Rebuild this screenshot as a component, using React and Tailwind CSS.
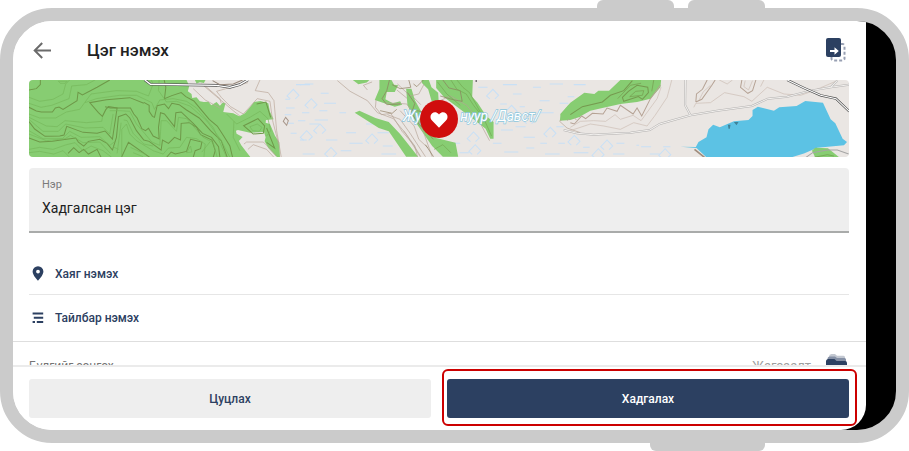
import { useState } from "react";

const ArrowBack = () => (
  <svg width="18" height="18" viewBox="0 0 18 18" fill="none" stroke="#6b6b6b" strokeWidth="2">
    <path d="M18 8.500H2M9.200 1 1.700 8.500l7.500 7.500" />
  </svg>
);

const MoveIcon = () => (
  <svg width="20" height="25" viewBox="0 0 20 25" fill="none">
    <path
      d="M15 6h1.500a2 2 0 0 1 2 2V20.500a2 2 0 0 1-2 2H7.500A2 2 0 0 1 5.500 20.500V19"
      stroke="#98a0b3"
      strokeWidth="2"
      strokeDasharray="3 2"
    />
    <rect x="0" y="0" width="15" height="19" rx="2" fill="#2c4061" />
    <path d="M4 12h4.500V9.300l4.300 3.700-4.300 3.700V14H4z" fill="#fff" />
  </svg>
);

const PlaceIcon = () => (
  <svg width="12" height="15" viewBox="0 0 12 15">
    <path
      d="M6 0.200A5.400 5.400 0 0 0 .6 5.600C.6 9.500 6 14.800 6 14.800s5.400-5.300 5.400-9.200A5.400 5.400 0 0 0 6 .2zm0 7.300a1.900 1.900 0 1 1 0-3.800 1.900 1.900 0 0 1 0 3.800z"
      fill="#2c4061"
    />
  </svg>
);

const NotesIcon = () => (
  <svg width="12" height="12" viewBox="0 0 12 12" fill="#2c4061">
    <path d="M0.600 0.500h10.600v2H0.600zM1.800 4.700h9.400v2H1.800zM0.600 9h2.400v2H0.600zM4.800 9h6.400v2H4.800z" />
  </svg>
);

const FolderIcon = () => (
  <svg width="21" height="24" viewBox="0 0 21 24">
    <path d="M3 2.500Q3.200 0 5.500 0h3.500l2 1.800h6.500q1.500 0 1.500 1.500V8H3z" fill="#c3c8d1" />
    <path d="M1.500 5Q1.500 2.500 4 2.500h5l2 1.500h7.500q1.500 0 1.500 1.500V9H1.500z" fill="#8590a5" />
    <path d="M0 7.500q0-2.500 2.500-2.500H8.500l2 2h8.500q2 0 2 2V24H0z" fill="#2c4061" />
  </svg>
);

const HeartPin = () => (
  <svg width="38" height="38" viewBox="0 0 38 38">
    <circle cx="19" cy="19" r="19" fill="#d00d0d" />
    <path
      d="M19 27.800 12 20.600C10 18.600 9.900 15.200 11.900 13.400c2-1.800 5-1.500 6.500.4l.6.800.6-.8c1.500-1.900 4.500-2.200 6.500-.4 2 1.800 1.900 5.200-.1 7.200z"
      fill="#fff"
    />
  </svg>
);

// marsh symbol, a diamond left open at the lower right
const Marsh = ({ x, y }) => (
  <path transform={`translate(${x} ${y})`} d="M-9 13-19 4 0-16 17 2 6 13" />
);

const marshes = [
  [792, 44], [846, 72], [832, 168], [872, 148], [1028, 178], [905, 218],
  [1390, 44], [1446, 92], [1500, 118], [1332, 172], [1562, 158], [1337, 210],
  [1634, 182], [1732, 196], [1706, 222], [1906, 222],
];

const TerrainMap = () => (
  <svg viewBox="0 0 2457 231" preserveAspectRatio="xMidYMid slice" className="h-full w-full" fill="none">
    <rect width="2457" height="231" fill="#eae6e3" />
    <g stroke="#c8e0f6" strokeWidth="3">
      {marshes.map(([x, y]) => (
        <Marsh key={`${x}-${y}`} x={x} y={y} />
      ))}
      <path d="M768 58h14M770 84h14M766 104h20M782 84h14M800 14h16M826 12h26M776 130h18M784 160h18M806 122h22" />
      <path d="M812 14h30M874 40h24M884 70h36M818 98h22M870 92h24M856 120h40M930 98h20M812 180h20M840 132h30M890 180h34M820 222h36M934 212h32M950 158h30M960 190h40M1010 132h24M1044 158h34M1060 198h30M1056 222h44" />
      <path d="M1346 22h28M1420 14h42M1450 42h26M1510 22h24M1560 12h40M1530 62h30M1412 72h20M1470 80h16M1400 122h30M1414 150h36M1458 140h30M1530 98h42M1590 70h26M1390 190h26M1424 216h42M1482 172h34M1490 204h24M1532 190h20M1546 222h44M1290 218h28M1270 190h22M1586 190h20M1580 140h22" />
      <path d="M1632 14h36M1614 50h20M1632 218h44M1760 190h24M1660 202h20M1750 222h34M1820 196h8M1834 200h30M1860 222h30M1900 200h22" />
    </g>

    {/* west hills */}
    <g transform="translate(-28 -28)">
      <path
        fill="#87cd72"
        d="M28 28H500L508 46 504 62 515 70 517 82 530 80 540 92 552 94 566 93 574 104 590 94 600 105 608 96 617 97 610 124 640 128 658 137 675 128 690 110 702 94 722 91 745 98 750 123 761 146 738 148 737 156 750 160 765 195 778 215 780 260H770L742 235 690 260H28Z"
      />
      <path fill="#87cd72" d="M525 28h32l-5 9-12-2-10 4z" />
      <path fill="#eae6e3" d="M648 180 654 178 690 186 732 184 737 200 734 212 745 232 772 260H692L664 224 657 211 668 199 650 189z" />
      <g stroke="#6e9848" strokeWidth="3">
        <path d="M28 110 50 121 65 124 98 124 107 112 118 109 130 116 172 90 175 65 188 73 232 50 270 28" />
        <path d="M28 153 45 175 76 197 120 196 133 193 141 167 190 185 232 188 256 181 278 205 292 112 266 108 258 117 248 137 236 126 210 96 260 87 330 81 372 98" />
        <path d="M256 108 272 112 332 112 342 130 352 142 366 174 377 180 386 173 400 196 418 205 416 170 422 126 434 130 464 168 468 126 484 124 520 158 548 188 575 200 596 228 600 260" />
        <path d="M433 28 438 50 434 84 456 75 484 66 498 78 522 91 546 120 568 146 592 166 610 194 630 226 638 260" />
        <path d="M372 95 388 104 388 122 398 137 404 140 412 105 434 100 446 114 456 98 478 102 500 118 538 142 572 180 604 210 622 260" />
        <path d="M28 202 60 214 98 212 140 206 168 202 176 214 192 226 206 212 240 206 262 218 278 238 290 200 296 138 318 130 330 142 350 180 372 208 388 212 424 238 428 208 446 218 464 200 482 208 484 158 508 156 530 170 542 192 576 208 586 240 580 260" />
        <path d="M145 248 162 231 178 246 192 236 206 250 232 236 244 260M305 260 326 215 390 260M440 260 454 244 466 250 500 242 512 206 546 214 542 234 526 240 520 260" />
        <path d="M671 165 714 144 734 166 730 188 700 190Z" />
        <path d="M710 100 738 94 752 140M740 172 764 232 740 215" />
        <path d="M62 28 62 42 50 54 28 58" />
      </g>
      <g stroke="#76b65b" strokeWidth="2">
        <path d="M28 80 60 92 100 86 130 70 138 40 150 28M28 98 64 110 96 104 148 84 156 46 200 42 226 28" />
        <path d="M28 130 60 142 108 142 140 124 180 116 214 70 290 60 350 62 386 76 400 40 394 28" />
        <path d="M28 140 80 166 112 168 136 150 200 156 246 152 248 140M28 146 70 182 116 182 138 160 196 172 250 170 270 190 280 130" />
        <path d="M28 180 70 204 128 204 150 182 184 200 240 198 270 224 286 212M28 190 80 210 136 204 152 194 190 216 240 214 272 248" />
        <path d="M28 236 60 230 100 236 140 222 166 216 190 240 214 226 250 240 276 260M28 246 60 242 102 250 130 240 150 260" />
        <path d="M196 96 230 84 300 74 350 74 396 96 404 116 420 88 460 84 500 92 530 112 580 170 620 260" />
        <path d="M270 120 300 120 330 122 350 160 376 190 396 214 420 224 424 150 440 150 470 182 476 140 500 144 550 200 580 216 592 260" />
        <path d="M306 260 306 176 320 160 330 190 350 210 400 240 430 250 446 232 480 230 500 200 530 204 556 220 552 260" />
        <path d="M312 148 322 150 340 188 372 220 400 226M292 248 304 156M332 230 380 252M340 246 370 258M280 228 296 236" />
        <path d="M418 28 416 60 440 94 470 92 510 106 560 150 602 206 630 260M500 246 512 226 516 244zM546 244 570 214" />
        <path d="M620 130 650 160 690 140 720 122 744 144 752 180 740 196M690 168 712 160 726 170 718 182 698 180zM642 152 640 200 660 240" />
        <path d="M116 32h26l-6 6h-14z" />
      </g>
      <g stroke="#b9a699" strokeWidth="2">
        <path d="M545 40 590 78 640 120 660 136M520 54 556 88 600 112M556 46 600 84 604 98" />
        <path d="M720 28 706 60 745 66 762 90 770 180 784 260M590 62 640 48 684 36M590 62 604 80 632 108 670 130 712 84 750 92 758 150 776 220" />
        <path d="M672 220 680 214 730 214 746 230 768 256M684 236 700 222 740 236 762 260" />
      </g>
      <path d="M790 152 797 140 805 150 800 164Z" stroke="#a8978b" strokeWidth="3" />
      <path d="M375 28 392 41 590 44 630 50 660 42 684 28" stroke="#4d4d4d" strokeWidth="8" />
      <path d="M375 28 392 41 590 44 630 50 660 42 684 28" stroke="#fff" strokeWidth="4" />
      <path d="M578 30 600 42 640 40 668 28" stroke="#96867a" strokeWidth="3" />
    </g>

    {/* ridge in the middle */}
    <g transform="translate(812 -28)">
      <g fill="#87cd72">
        <path d="M158 28h50l-8 8-25 5zM238 28h36l8 14 12 2-10 20-24 0-4 22 22 12 22-6 6 10-22 6-60-20 14-34z" />
        <path d="M318 54h16l10 34 20 36 20 50 24 28 58 14 8 42H428L396 226 350 160 322 104zM364 28h22l8 22 20 16 2 34-22-10-10-34-18-18z" />
        <path d="M408 28h110l-2 50 16 18 26 40 22 18 0 50h-10l-14-30-36-28-56-42-32-24-24-28z" />
        <path d="M164 126 178 120 226 142 266 154 300 190 354 258H318L266 182 236 172Z" />
        <path d="M840 84 804 104 784 130 778 150 810 148 840 138z" />
      </g>
      <g stroke="#b5a396" strokeWidth="2">
        <path d="M112 30 150 62 202 90 232 126 280 144 318 190 360 258" />
        <path d="M202 58 190 44 216 34M228 88 226 110 244 132 272 128 306 182 340 222 362 258M292 40 330 76 356 70 372 40M290 58 322 84M340 80 362 102M254 96 320 100 344 132 372 190 396 258" />
        <path d="M262 132 300 146 330 188 376 258M300 120 342 166 356 206 384 232M310 180 344 226 352 258M420 90 450 76 500 104 536 150 568 210" />
        <path d="M778 152 812 126 840 124M778 152 800 172 840 186M800 150 818 136 828 148" />
      </g>
      <g stroke="#8c7a5d" strokeWidth="2">
        <path d="M268 28 260 60 246 84 260 102 300 100M326 28 332 50 300 54 276 42M370 28 350 48 340 40" />
        <path d="M322 66 344 98 334 128 352 154 372 178 400 206M350 120 370 124M376 222 400 258" />
        <path d="M428 28 446 52 480 60 486 92 462 88 420 76M240 120 276 128 290 116" />
      </g>
      <g stroke="#74a753" strokeWidth="2">
        <path d="M452 28 470 56 498 70 520 104 550 142 574 196M470 28 488 50 508 66 540 124M412 34 440 70 480 104M402 236 428 222 452 246" />
      </g>
      <path d="M528 28v6" stroke="#666" strokeWidth="4" />
      <g fontFamily="Roboto, sans-serif" fontSize="41" fontStyle="italic" fill="#fff" stroke="#8cc7de" strokeWidth="4" paintOrder="stroke">
        <text x="309" y="150">Жуун</text>
        <text x="480" y="150">нуур /Давст/</text>
      </g>
    </g>

    {/* lake and roads in the east */}
    <g transform="translate(1622 -28)">
      <path fill="#87cd72" d="M150 28H272L270 50 240 84 200 94 150 100 96 112 60 120 32 136 0 144-30 148V130L0 96 42 66 72 70 84 60 116 60Z" />
      <g stroke="#75994f" strokeWidth="3">
        <path d="M0 132 36 108 96 94 120 74 160 60 186 30M156 80 174 62 200 44 232 50 234 66 216 86 204 78 160 92Z" />
        <path d="M178 78 196 62 220 60 216 74 196 76ZM142 84 180 44 212 38M250 28 244 62" strokeWidth="2" />
      </g>
      <g stroke="#b5a294" strokeWidth="3">
        <path d="M0 156 12 160 34 136 46 144 66 128 98 130 110 112 140 122 150 104 188 130 200 112 214 136 240 84 270 44" />
        <path d="M376 94 378 70 396 56 410 28M376 94 394 86 424 44 434 28M514 28 510 50 532 68 546 60 556 28" />
      </g>
      <g stroke="#cbbdb3" strokeWidth="2">
        <path d="M0 170 30 152 70 150 106 152 134 132 150 146 188 134 212 150 260 84 272 50" />
        <path d="M0 180 60 160 100 166 150 176 190 156 230 166 254 134 290 80 304 28" />
        <path d="M370 110 376 98 420 96 462 66 520 78 544 92 590 50 640 70 690 74 730 60 800 30" />
        <path d="M386 88 398 64 420 44M524 30 520 48 534 58 546 30M446 28 470 40 486 28M580 28 570 48" />
      </g>
      <g stroke="#b3b1b0" strokeWidth="6">
        <path d="M-20 178 20 188 70 192 180 186 238 178 268 160 360 134 440 120 544 106 592 84 650 78 720 60 780 50 836 42" />
        <path d="M345 28 344 104 360 134M780 50 800 30" />
      </g>
      <g stroke="#f2f0ee" strokeWidth="3">
        <path d="M-20 178 20 188 70 192 180 186 238 178 268 160 360 134 440 120 544 106 592 84 650 78 720 60 780 50 836 42" />
        <path d="M345 28 344 104 360 134M780 50 800 30" />
      </g>
      <path d="M650 28 700 52 750 74 796 84 836 122" stroke="#4d4d4d" strokeWidth="7" />
      <path d="M650 28 700 52 750 74 796 84 836 122" stroke="#fff" strokeWidth="3" />
      <path
        fill="#5cc2e4"
        d="M330 228 376 229 384 214 408 200 414 176 428 162 448 170 490 152 534 148 546 136 546 118 562 108 610 120 626 110 678 106 704 91 757 96 780 146 794 158 816 204 829 214 820 224 740 231 700 248 662 260H408L378 232Z"
      />
      <path d="M372 236 402 260" stroke="#a08c7c" strokeWidth="5" />
      <path d="M472 162h8l-2 12h-4zM490 154h14l-6 10z" fill="#3f8298" />
      <path fill="#87cd72" d="M724 240 734 231 772 233 806 260H734Z" />
      <path d="M706 260 726 246 770 238 800 238 834 250" stroke="#a5a5a5" strokeWidth="3" />
      <path d="M730 260 770 252 790 256" stroke="#6e9848" strokeWidth="2" />
    </g>
  </svg>
);

const App = () => {
  const [name, setName] = useState("Хадгалсан цэг");

  return (
    <div className="w-full bg-white font-[Roboto,sans-serif]">
      {/* side keys above the frame */}
      <div className="flex h-2 justify-end gap-[14px] pr-36">
        <div className="w-[77px] rounded-t-md bg-[#cbcbcb]"></div>
        <div className="w-[77px] rounded-t-md bg-[#cbcbcb]"></div>
      </div>

      <div className="overflow-hidden rounded-[52px] border-[13px] border-[#cbcbcb] bg-[linear-gradient(to_right,white_50%,black_50%)] bg-origin-border pr-[30px]">
        <main className="rounded-br-[25px] bg-white">
          <header className="flex h-[59px] items-center justify-between px-5">
            <div className="flex items-center gap-9">
              <button type="button" aria-label="Буцах">
                <ArrowBack />
              </button>
              <h1 className="text-[17px] font-medium text-[#212121]">Цэг нэмэх</h1>
            </div>
            <button type="button" aria-label="Зөөх">
              <MoveIcon />
            </button>
          </header>

          <div className="pr-[17px] pl-4">
            <div className="relative h-[77px] overflow-hidden rounded">
              <TerrainMap />
              <div className="absolute inset-0 flex items-center justify-center">
                <HeartPin />
              </div>
            </div>

            <div className="mt-[11px] flex h-[65px] flex-col rounded-t border-b-2 border-[#a9abaa] bg-[#eeeeee] px-[13px] pt-[9px]">
              <label htmlFor="name" className="text-[11px] leading-4 text-[#7a7a7a]">
                Нэр
              </label>
              <input
                id="name"
                className="mt-[3px] h-6 w-full bg-transparent text-[14px] text-[#212121] outline-none"
                value={name}
                onChange={(e) => setName(e.target.value)}
              />
            </div>

            <button
              type="button"
              className="mt-5 flex h-[42px] w-full items-center gap-[11px] border-b border-[#e6e6e6] pl-[3px] text-[12px] font-medium text-[#2c4061]"
            >
              <PlaceIcon />
              Хаяг нэмэх
            </button>
            <button
              type="button"
              className="flex h-[46px] w-full items-center gap-[11px] pl-[3px] text-[12px] font-medium text-[#2c4061]"
            >
              <NotesIcon />
              Тайлбар нэмэх
            </button>
          </div>

          {/* the group row, cut off by the footer */}
          <div className="flex h-6 items-start justify-between overflow-hidden border-t border-[#dedede] pr-[19px] pl-4">
            <span className="pt-[14px] text-[12px] leading-5 text-[#757575]">Бүлгийг сонгох</span>
            <div className="flex items-start gap-[15px]">
              <span className="pt-[14px] text-[13px] leading-5 text-[#9e9e9e]">Жагсаалт</span>
              <div className="pt-3">
                <FolderIcon />
              </div>
            </div>
          </div>

          <footer className="flex gap-4 border-t-2 border-[#ebebeb] py-3 pr-[17px] pl-4">
            <button
              type="button"
              className="h-[39px] flex-1 rounded-[3px] bg-[#eeeeee] text-[12px] font-medium text-[#2c4061]"
            >
              Цуцлах
            </button>
            <div className="relative flex flex-1">
              <button
                type="button"
                className="h-[39px] w-full rounded-[3px] bg-[#2c4061] text-[12px] font-medium text-white"
              >
                Хадгалах
              </button>
              <div className="pointer-events-none absolute -top-2.5 -right-2 -bottom-2 -left-[5px] rounded-md border-2 border-[#cc0000]"></div>
            </div>
          </footer>
        </main>
      </div>

      <div className="flex h-2 justify-end pr-36">
        <div className="w-[115px] rounded-b-md bg-[#cbcbcb]"></div>
      </div>
    </div>
  );
};

export default App;
